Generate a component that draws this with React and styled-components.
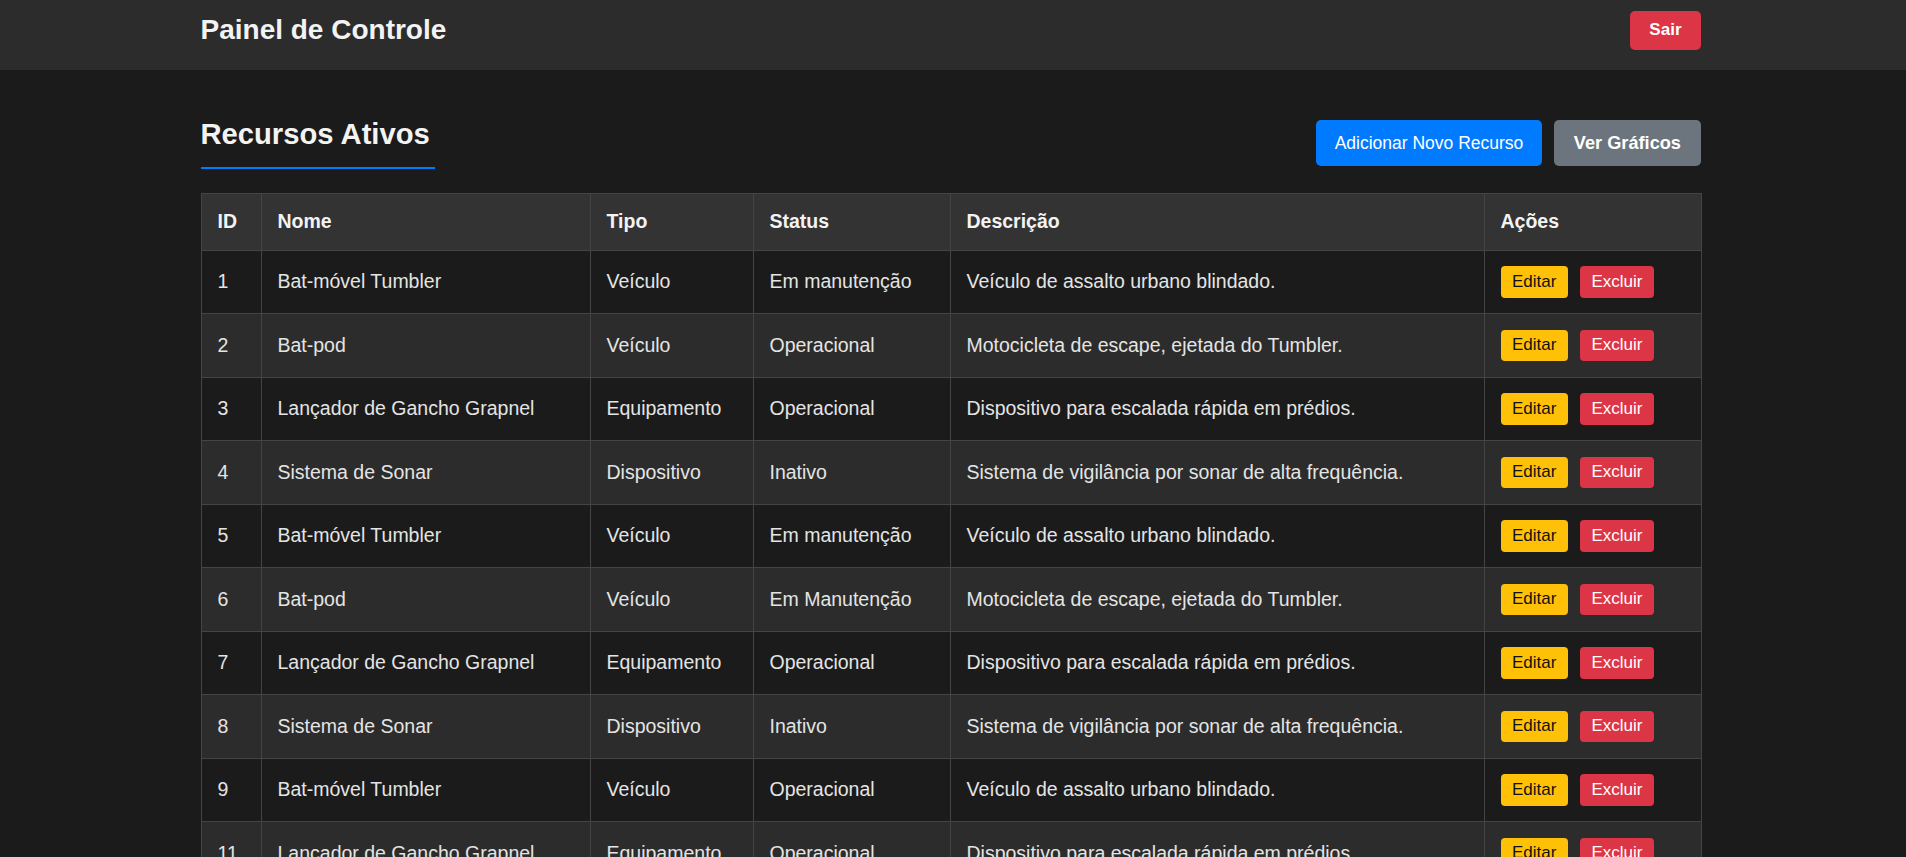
import React from 'react';
import styled, { createGlobalStyle } from 'styled-components';

const GlobalStyle = createGlobalStyle`
  html::-webkit-scrollbar {
    width: 6px;
  }
  html::-webkit-scrollbar-track {
    background: #1b1b1b;
  }
  html::-webkit-scrollbar-thumb {
    background: #9a9a9a;
    border-radius: 3px;
  }
  body {
    margin: 0;
    padding-right: 5px;
    background-color: #1b1b1b;
    color: #e2e2e2;
    font-family: 'Liberation Sans', Arial, sans-serif;
  }
  * {
    box-sizing: border-box;
  }
`;

const TopBar = styled.header`
  height: 70px;
  padding-top: 10px;
  margin-right: -5px;
  padding-right: 5px;
  background-color: #2c2c2c;
`;

const TopBarInner = styled.div`
  width: 1500px;
  height: 40px;
  margin: 0 auto;
  display: flex;
  align-items: center;
  justify-content: space-between;
`;

const BrandTitle = styled.h1`
  margin: 0;
  font-size: 28px;
  font-weight: bold;
  color: #f3f3f3;
`;

const BaseButton = styled.button`
  border: none;
  cursor: pointer;
  font-family: inherit;
  color: #fff;
  display: inline-flex;
  align-items: center;
  justify-content: center;
`;

const LogoutButton = styled(BaseButton)`
  height: 39px;
  padding: 0 19px;
  border-radius: 5px;
  background-color: #dc3545;
  font-size: 17px;
  font-weight: bold;
`;

const Main = styled.main`
  width: 1500px;
  margin: 48px auto 0;
  padding-bottom: 60px;
`;

const Toolbar = styled.div`
  display: flex;
  align-items: center;
  justify-content: space-between;
  margin-bottom: 24px;
`;

const SectionTitle = styled.h2`
  display: inline-block;
  margin: 0;
  padding: 0 5px 15.5px 0;
  font-size: 29.2px;
  font-weight: bold;
  color: #f3f3f3;
  border-bottom: 2.5px solid #007bff;
`;

const ToolbarActions = styled.div`
  display: flex;
  gap: 12px;
`;

const ActionButton = styled(BaseButton)`
  height: 46px;
  border-radius: 5px;
  padding: 0 ${({ $bold }) => ($bold ? '19.5px' : '19px')};
  font-size: ${({ $bold }) => ($bold ? '18.2px' : '17.5px')};
  font-weight: ${({ $bold }) => ($bold ? 'bold' : 'normal')};
  background-color: ${({ $variant }) => ($variant === 'gray' ? '#6c757d' : '#007bff')};
`;

const Table = styled.table`
  width: 1500px;
  table-layout: fixed;
  border-collapse: collapse;
  border: 1px solid #444;
`;

const HeadCell = styled.th`
  padding: 16.5px 16px;
  text-align: left;
  font-size: 19.5px;
  font-weight: bold;
  color: #f3f3f3;
  background-color: #333;
  border: 1px solid #444;
`;

const Row = styled.tr`
  background-color: ${({ $striped }) => ($striped ? '#2c2c2c' : '#1b1b1b')};
`;

const Cell = styled.td`
  padding: 15.5px 16px;
  font-size: 19.5px;
  color: #e4e4e4;
  vertical-align: middle;
  white-space: nowrap;
  border: 1px solid #444;
`;

const RowActions = styled.div`
  display: flex;
  gap: 12px;
`;

const SmallButton = styled(BaseButton)`
  height: 31.5px;
  padding: 0 11.5px;
  border-radius: 4px;
  font-size: 17px;
  color: ${({ $danger }) => ($danger ? '#fff' : '#111')};
  background-color: ${({ $danger }) => ($danger ? '#dc3545' : '#ffc107')};
`;

const columns = [
  { label: 'ID', width: 60 },
  { label: 'Nome', width: 329 },
  { label: 'Tipo', width: 163 },
  { label: 'Status', width: 197 },
  { label: 'Descrição', width: 534 },
  { label: 'Ações', width: 217 },
];

const resources = [
  { id: 1, name: 'Bat-móvel Tumbler', type: 'Veículo', status: 'Em manutenção', desc: 'Veículo de assalto urbano blindado.' },
  { id: 2, name: 'Bat-pod', type: 'Veículo', status: 'Operacional', desc: 'Motocicleta de escape, ejetada do Tumbler.' },
  { id: 3, name: 'Lançador de Gancho Grapnel', type: 'Equipamento', status: 'Operacional', desc: 'Dispositivo para escalada rápida em prédios.' },
  { id: 4, name: 'Sistema de Sonar', type: 'Dispositivo', status: 'Inativo', desc: 'Sistema de vigilância por sonar de alta frequência.' },
  { id: 5, name: 'Bat-móvel Tumbler', type: 'Veículo', status: 'Em manutenção', desc: 'Veículo de assalto urbano blindado.' },
  { id: 6, name: 'Bat-pod', type: 'Veículo', status: 'Em Manutenção', desc: 'Motocicleta de escape, ejetada do Tumbler.' },
  { id: 7, name: 'Lançador de Gancho Grapnel', type: 'Equipamento', status: 'Operacional', desc: 'Dispositivo para escalada rápida em prédios.' },
  { id: 8, name: 'Sistema de Sonar', type: 'Dispositivo', status: 'Inativo', desc: 'Sistema de vigilância por sonar de alta frequência.' },
  { id: 9, name: 'Bat-móvel Tumbler', type: 'Veículo', status: 'Operacional', desc: 'Veículo de assalto urbano blindado.' },
  { id: 11, name: 'Lançador de Gancho Grapnel', type: 'Equipamento', status: 'Operacional', desc: 'Dispositivo para escalada rápida em prédios.' },
  { id: 12, name: 'Sistema de Sonar', type: 'Dispositivo', status: 'Inativo', desc: 'Sistema de vigilância por sonar de alta frequência.' },
];

const App = () => {
  return (
    <>
      <GlobalStyle />
      <TopBar>
        <TopBarInner>
          <BrandTitle>Painel de Controle</BrandTitle>
          <LogoutButton type="button">Sair</LogoutButton>
        </TopBarInner>
      </TopBar>

      <Main>
        <Toolbar>
          <SectionTitle>Recursos Ativos</SectionTitle>
          <ToolbarActions>
            <ActionButton type="button">Adicionar Novo Recurso</ActionButton>
            <ActionButton type="button" $variant="gray" $bold>
              Ver Gráficos
            </ActionButton>
          </ToolbarActions>
        </Toolbar>

        <Table>
          <colgroup>
            {columns.map((col) => (
              <col key={col.label} style={{ width: col.width }} />
            ))}
          </colgroup>
          <thead>
            <tr>
              {columns.map((col) => (
                <HeadCell key={col.label}>{col.label}</HeadCell>
              ))}
            </tr>
          </thead>
          <tbody>
            {resources.map((item, i) => (
              <Row key={item.id} $striped={i % 2 === 1}>
                <Cell>{item.id}</Cell>
                <Cell>{item.name}</Cell>
                <Cell>{item.type}</Cell>
                <Cell>{item.status}</Cell>
                <Cell>{item.desc}</Cell>
                <Cell>
                  <RowActions>
                    <SmallButton type="button">Editar</SmallButton>
                    <SmallButton type="button" $danger>
                      Excluir
                    </SmallButton>
                  </RowActions>
                </Cell>
              </Row>
            ))}
          </tbody>
        </Table>
      </Main>
    </>
  );
};

export default App;
